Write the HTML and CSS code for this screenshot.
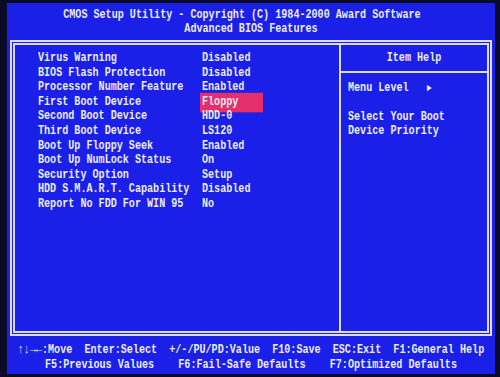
FILE: index.html
```html
<!DOCTYPE html>
<html lang="en">
<head>
    <meta charset="UTF-8">
    <title>Advanced BIOS Features</title>
    <link rel="stylesheet" href="styles.css">
</head>
<body>

<div class="screen">
    <div class="title">
        <div class="line">CMOS Setup Utility - Copyright (C) 1984-2000 Award Software   </div>
        <div class="line">Advanced BIOS Features</div>
    </div>

    <div class="panel">
        <div class="settings">
            <div class="row"><span class="label">Virus Warning</span><span class="value">Disabled</span></div>
            <div class="row"><span class="label">BIOS Flash Protection</span><span class="value">Disabled</span></div>
            <div class="row"><span class="label">Processor Number Feature</span><span class="value">Enabled</span></div>
            <div class="row"><span class="label">First Boot Device</span><span class="value selected">Floppy</span></div>
            <div class="row"><span class="label">Second Boot Device</span><span class="value">HDD-0</span></div>
            <div class="row"><span class="label">Third Boot Device</span><span class="value">LS120</span></div>
            <div class="row"><span class="label">Boot Up Floppy Seek</span><span class="value">Enabled</span></div>
            <div class="row"><span class="label">Boot Up NumLock Status</span><span class="value">On</span></div>
            <div class="row"><span class="label">Security Option</span><span class="value">Setup</span></div>
            <div class="row"><span class="label">HDD S.M.A.R.T. Capability</span><span class="value">Disabled</span></div>
            <div class="row"><span class="label">Report No FDD For WIN 95</span><span class="value">No</span></div>
        </div>

        <div class="help">
            <div class="help-title"><span class="line">Item Help</span></div>
            <div class="help-body">
                <div class="line">Menu Level   <span class="arrow">&#9658;</span></div>
                <div class="line">&nbsp;</div>
                <div class="line">Select Your Boot</div>
                <div class="line">Device Priority</div>
            </div>
        </div>
    </div>

    <div class="footer">
        <div class="line">&uarr;&darr;&rarr;&larr;:Move  Enter:Select  +/-/PU/PD:Value  F10:Save  ESC:Exit  F1:General Help</div>
        <div class="line">F5:Previous Values    F6:Fail-Safe Defaults    F7:Optimized Defaults</div>
    </div>
</div>

</body>
</html>
```

FILE: styles.css
```css
body {
    margin: 0;
    background: #0b0b26;
    font-family: "Liberation Mono", "DejaVu Sans Mono", monospace;
    font-weight: bold;
    font-size: 10.1px;
    color: #ececf4;
}

.screen {
    margin: 3px 5px 3px 7px;
    height: 371px;
    padding: 0 3px;
    background: #1a20e8;
    box-sizing: border-box;
}

/* text is taller than it is wide on the bios font */
.line,
.row {
    white-space: pre;
    transform: scaleY(1.3);
}

.title {
    padding-top: 5px;
    text-align: center;
    line-height: 14px;
}

.panel {
    display: flex;
    margin-top: 4px;
    height: 296px;
    border: 5px double #dcdcec;
    box-sizing: border-box;
}

.settings {
    width: 326px;
    padding: 6px 0 0 23px;
    border-right: 2px solid #dcdcec;
    box-sizing: border-box;
}

.row {
    display: flex;
    line-height: 14.6px;
}

.label {
    width: 164px;
    flex-shrink: 0;
}

.value.selected {
    width: 61px;
    margin-left: -2px;
    padding-left: 2px;
    background: #e3306c;
}

.help {
    flex: 1;
}

.help-title {
    height: 26px;
    line-height: 26px;
    text-align: center;
    border-bottom: 2px solid #dcdcec;
}

.help-title .line {
    display: inline-block;
}

.help-body {
    padding: 7.5px 0 0 7px;
    line-height: 14.6px;
}

.arrow {
    font-size: 8px;
}

.footer {
    padding-top: 6px;
    text-align: center;
    line-height: 15px;
}
```
